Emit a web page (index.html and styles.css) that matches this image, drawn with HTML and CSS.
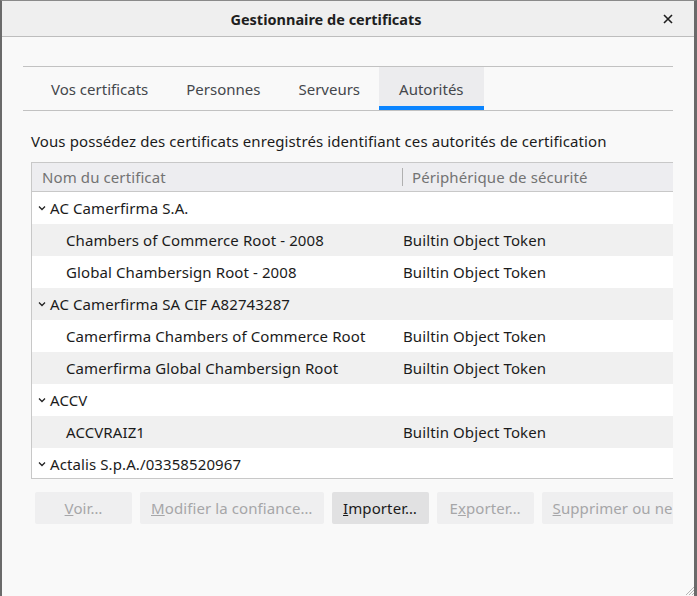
FILE: index.html
```html
<!DOCTYPE html>
<html lang="fr">
<head>
<meta charset="utf-8">
<title>Gestionnaire de certificats</title>
<link rel="stylesheet" href="styles.css">
</head>
<body>
<div class="window">
  <header class="titlebar">
    <span class="title">Gestionnaire de certificats</span>
    <span class="close" aria-label="Fermer">
      <svg width="10" height="10" viewBox="0 0 10 10"><path d="M1 1 L9 9 M9 1 L1 9" stroke="#1e1e1e" stroke-width="1.6" fill="none"/></svg>
    </span>
  </header>
  <main class="content">
    <nav class="tabs">
      <div class="tab">Vos certificats</div>
      <div class="tab">Personnes</div>
      <div class="tab">Serveurs</div>
      <div class="tab active">Autorités</div>
    </nav>
    <p class="desc">Vous possédez des certificats enregistrés identifiant ces autorités de certification</p>
    <div class="tree">
      <div class="tree-head">
        <div class="col1">Nom du certificat</div>
        <div class="col2">Périphérique de sécurité</div>
      </div>
      <div class="rows">
        <div class="row parent"><span class="name"><svg class="chev" width="8" height="6" viewBox="0 0 8 6"><path d="M1 1.5 L4 4.5 L7 1.5" stroke="#222" stroke-width="1.3" fill="none"/></svg>AC Camerfirma S.A.</span><span class="dev"></span></div>
        <div class="row child"><span class="name">Chambers of Commerce Root - 2008</span><span class="dev">Builtin Object Token</span></div>
        <div class="row child"><span class="name">Global Chambersign Root - 2008</span><span class="dev">Builtin Object Token</span></div>
        <div class="row parent"><span class="name"><svg class="chev" width="8" height="6" viewBox="0 0 8 6"><path d="M1 1.5 L4 4.5 L7 1.5" stroke="#222" stroke-width="1.3" fill="none"/></svg>AC Camerfirma SA CIF A82743287</span><span class="dev"></span></div>
        <div class="row child"><span class="name">Camerfirma Chambers of Commerce Root</span><span class="dev">Builtin Object Token</span></div>
        <div class="row child"><span class="name">Camerfirma Global Chambersign Root</span><span class="dev">Builtin Object Token</span></div>
        <div class="row parent"><span class="name"><svg class="chev" width="8" height="6" viewBox="0 0 8 6"><path d="M1 1.5 L4 4.5 L7 1.5" stroke="#222" stroke-width="1.3" fill="none"/></svg>ACCV</span><span class="dev"></span></div>
        <div class="row child"><span class="name">ACCVRAIZ1</span><span class="dev">Builtin Object Token</span></div>
        <div class="row parent"><span class="name"><svg class="chev" width="8" height="6" viewBox="0 0 8 6"><path d="M1 1.5 L4 4.5 L7 1.5" stroke="#222" stroke-width="1.3" fill="none"/></svg>Actalis S.p.A./03358520967</span><span class="dev"></span></div>
      </div>
    </div>
    <div class="buttons">
      <button class="btn" disabled><u>V</u>oir…</button>
      <button class="btn wide" disabled><u>M</u>odifier la confiance…</button>
      <button class="btn primary"><u>I</u>mporter…</button>
      <button class="btn" disabled>E<u>x</u>porter…</button>
      <button class="btn cut" disabled><u>S</u>upprimer ou ne pas faire confiance…</button>
    </div>
  </main>
  <svg class="grip" width="8" height="10" viewBox="0 0 8 10"><path d="M8 2 L0 10 M8 5 L3 10 M8 8 L6 10" stroke="#b5b5b5" stroke-width="1"/></svg>
</div>
</body>
</html>
```

FILE: styles.css
```css
* { box-sizing: border-box; }
html, body { margin: 0; padding: 0; }
body {
  width: 697px;
  height: 596px;
  overflow: hidden;
  background: #f9f9f9;
  font-family: "Noto Sans", "Open Sans", sans-serif;
  font-size: 15px;
  letter-spacing: 0.1px;
  color: #1b1b1b;
}
.window {
  position: relative;
  width: 697px;
  height: 596px;
  display: flex;
  flex-direction: column;
  border-left: 2px solid #6a6a6a;
  border-right: 3px solid #6a6a6a;
  border-top: 1px solid #8a8a8a;
  background: #f9f9f9;
  overflow: hidden;
}
.titlebar {
  height: 36px;
  flex: none;
  display: flex;
  align-items: center;
  justify-content: center;
  position: relative;
  background: #efefef;
  border-bottom: 1px solid #bdbdbd;
}
.title {
  font-weight: bold;
  font-size: 14.5px;
  letter-spacing: 0;
  color: #1e1e1e;
  margin-right: 44px;
}
.close {
  position: absolute;
  right: 21px;
  top: 13px;
  width: 10px;
  height: 10px;
  display: flex;
}
.content {
  flex: 1;
  padding: 29px 21px 0 21px;
  display: flex;
  flex-direction: column;
  overflow: hidden;
}
.tabs {
  display: flex;
  border-top: 1px solid #c2c2c2;
  border-bottom: 1px solid #c2c2c2;
  padding-left: 8px;
  height: 45px;
}
.tab {
  height: 43px;
  padding: 0 19px;
  display: flex;
  align-items: center;
  color: #44474c;
  letter-spacing: 0;
}
.tab:first-child { padding-left: 20px; }
.tab.active {
  background: #ececee;
  box-shadow: inset 0 -4px 0 #0a84ff;
  padding: 0 20px;
}
.desc {
  margin: 20px 0 0 8px;
  line-height: 20px;
  height: 20px;
  white-space: nowrap;
}
.tree {
  margin: 11px 0 0 8px;
  border: 1px solid #c8c8c8;
  border-right: none;
  height: 317px;
  background: #ffffff;
  display: flex;
  flex-direction: column;
  overflow: hidden;
}
.tree-head {
  flex: none;
  height: 29px;
  display: flex;
  align-items: center;
  background: #ededf0;
  border-bottom: 1px solid #c8c8c8;
  color: #737373;
}
.tree-head .col1 {
  width: 370px;
  padding-left: 10px;
}
.tree-head .col2 {
  border-left: 1px solid #b0b0b0;
  padding-left: 9px;
  height: 18px;
  line-height: 18px;
}
.rows { flex: 1; overflow: hidden; }
.row {
  height: 32px;
  display: flex;
  align-items: center;
  white-space: nowrap;
}
.row:nth-child(even) { background: #f0f0f0; }
.row .name {
  width: 371px;
  display: flex;
  align-items: center;
}
.row.parent .name { padding-left: 6px; }
.row.child .name { padding-left: 34px; }
.chev { margin-right: 4px; flex: none; }
.buttons {
  display: flex;
  gap: 8px;
  margin: 13px 0 0 12px;
  overflow: hidden;
  flex: none;
}
.btn {
  height: 32px;
  min-width: 97px;
  padding: 0 11px;
  border: none;
  border-radius: 2px;
  background: #efeff0;
  color: #a6a6a8;
  font-family: inherit;
  font-size: 15px;
  letter-spacing: 0.1px;
  white-space: nowrap;
  flex: none;
}
.btn.primary { background: #e1e1e2; color: #1b1b1b; }
.btn.cut { width: 140px; overflow: hidden; text-align: left; }
.btn u { text-decoration: underline; }
.grip { position: absolute; right: 0; bottom: 1px; }
```
